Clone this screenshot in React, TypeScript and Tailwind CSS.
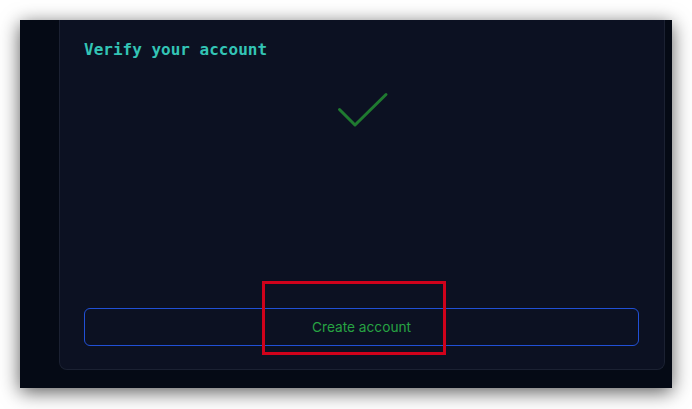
import React from "react";

export default function App() {
  return (
    <div className="relative w-[692px] h-[409px] bg-white overflow-hidden">
      <div className="absolute left-[20px] top-[20px] w-[652px] h-[368px] bg-[#050a15] shadow-[0_4px_18px_rgba(0,0,0,0.65)] flex overflow-hidden">
        <div className="w-[39px] shrink-0" />
        <div className="w-[606px] h-[350px] bg-[#0c1122] border-x border-b border-[#1b2132] rounded-b-[8px] flex flex-col pl-[24px] pr-[25px] pb-[23px] pt-[18px]">
          <div
            className="text-[16px] leading-[24px] font-bold text-[#33c4b5]"
            style={{ fontFamily: '"DejaVu Sans Mono", monospace' }}
          >
            Verify your account
          </div>
          <svg
            className="mt-[30px] ml-[253px] shrink-0"
            width="52"
            height="36"
            viewBox="0 0 52 36"
            fill="none"
          >
            <path
              d="M2.5 17.5 L18 33 L49 2.5"
              stroke="#1f7a30"
              strokeWidth="3"
              strokeLinecap="round"
              strokeLinejoin="round"
            />
          </svg>
          <button
            className="mt-auto h-[38px] w-full rounded-[6px] border border-[#2150d6] bg-transparent text-[13.7px] text-[#27a342]"
            style={{ fontFamily: 'Inter, "Noto Sans", sans-serif' }}
          >
            Create account
          </button>
        </div>
      </div>
      <div className="absolute left-[262px] top-[281px] w-[184px] h-[74px] border-[3px] border-[#d0021b]" />
    </div>
  );
}
